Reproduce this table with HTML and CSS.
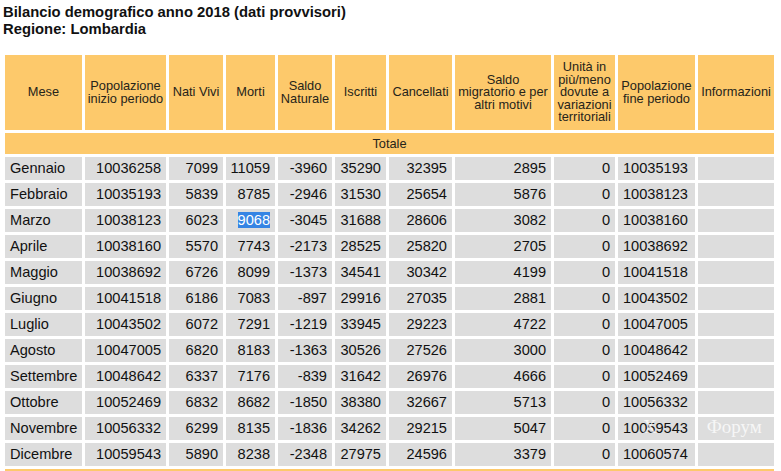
FILE: index.html
```html
<!DOCTYPE html>
<html lang="it">
<head>
<meta charset="utf-8">
<title>Bilancio demografico 2018 - Lombardia</title>
<link rel="stylesheet" href="styles.css">
</head>
<body>
<div class="page">
  <div class="title">
    <div>Bilancio demografico anno 2018 (dati provvisori)</div>
    <div>Regione: Lombardia</div>
  </div>
  <div class="table-wrap">
    <table class="bil">
      <thead>
        <tr>
          <th class="c1">Mese</th>
          <th class="c2">Popolazione inizio periodo</th>
          <th class="c3">Nati Vivi</th>
          <th class="c4">Morti</th>
          <th class="c5">Saldo Naturale</th>
          <th class="c6">Iscritti</th>
          <th class="c7">Cancellati</th>
          <th class="c8">Saldo migratorio e per altri motivi</th>
          <th class="c9">Unità in più/meno dovute a variazioni territoriali</th>
          <th class="c10">Popolazione fine periodo</th>
          <th class="c11">Informazioni</th>
        </tr>
        <tr class="tot"><th colspan="11">Totale</th></tr>
      </thead>
      <tbody>
        <tr><td class="m">Gennaio</td><td>10036258</td><td>7099</td><td>11059</td><td>-3960</td><td>35290</td><td>32395</td><td>2895</td><td>0</td><td class="l">10035193</td><td></td></tr>
        <tr><td class="m">Febbraio</td><td>10035193</td><td>5839</td><td>8785</td><td>-2946</td><td>31530</td><td>25654</td><td>5876</td><td>0</td><td class="l">10038123</td><td></td></tr>
        <tr><td class="m">Marzo</td><td>10038123</td><td>6023</td><td><span class="sel">9068</span></td><td>-3045</td><td>31688</td><td>28606</td><td>3082</td><td>0</td><td class="l">10038160</td><td></td></tr>
        <tr><td class="m">Aprile</td><td>10038160</td><td>5570</td><td>7743</td><td>-2173</td><td>28525</td><td>25820</td><td>2705</td><td>0</td><td class="l">10038692</td><td></td></tr>
        <tr><td class="m">Maggio</td><td>10038692</td><td>6726</td><td>8099</td><td>-1373</td><td>34541</td><td>30342</td><td>4199</td><td>0</td><td class="l">10041518</td><td></td></tr>
        <tr><td class="m">Giugno</td><td>10041518</td><td>6186</td><td>7083</td><td>-897</td><td>29916</td><td>27035</td><td>2881</td><td>0</td><td class="l">10043502</td><td></td></tr>
        <tr><td class="m">Luglio</td><td>10043502</td><td>6072</td><td>7291</td><td>-1219</td><td>33945</td><td>29223</td><td>4722</td><td>0</td><td class="l">10047005</td><td></td></tr>
        <tr><td class="m">Agosto</td><td>10047005</td><td>6820</td><td>8183</td><td>-1363</td><td>30526</td><td>27526</td><td>3000</td><td>0</td><td class="l">10048642</td><td></td></tr>
        <tr><td class="m">Settembre</td><td>10048642</td><td>6337</td><td>7176</td><td>-839</td><td>31642</td><td>26976</td><td>4666</td><td>0</td><td class="l">10052469</td><td></td></tr>
        <tr><td class="m">Ottobre</td><td>10052469</td><td>6832</td><td>8682</td><td>-1850</td><td>38380</td><td>32667</td><td>5713</td><td>0</td><td class="l">10056332</td><td></td></tr>
        <tr><td class="m">Novembre</td><td>10056332</td><td>6299</td><td>8135</td><td>-1836</td><td>34262</td><td>29215</td><td>5047</td><td>0</td><td class="l">10059543</td><td></td></tr>
        <tr><td class="m">Dicembre</td><td>10059543</td><td>5890</td><td>8238</td><td>-2348</td><td>27975</td><td>24596</td><td>3379</td><td>0</td><td class="l">10060574</td><td></td></tr>
      </tbody>
      <tfoot>
        <tr><td colspan="11" class="foot">&nbsp;</td></tr>
      </tfoot>
    </table>
    <div class="watermark"><span>Х</span><span class="wm2">Форум</span></div>
  </div>
</div>
</body>
</html>
```

FILE: styles.css
```css
html, body {
  margin: 0;
  padding: 0;
  background: #ffffff;
}
.page {
  padding: 4px 0 0 2px;
  font-family: "Liberation Sans", Arial, sans-serif;
  color: #111;
}
.title {
  padding-left: 1px;
  font-size: 14.8px;
  font-weight: bold;
  line-height: 16.5px;
}
.table-wrap {
  position: relative;
  margin-top: 15px;
  width: 775px;
}
.bil {
  border-collapse: separate;
  border-spacing: 3px;
  table-layout: fixed;
  width: 775px;
}
.bil th, .bil td {
  box-sizing: border-box;
}
.bil thead th {
  background: #fdc96b;
  color: #26241a;
  font-weight: normal;
  font-size: 12.8px;
  line-height: 12.6px;
  height: 75px;
  padding: 0 2px;
  text-align: center;
  vertical-align: middle;
}
.bil .c1 { width: 77px; }
.bil .c2 { width: 81px; }
.bil .c3 { width: 54px; }
.bil .c4 { width: 49px; }
.bil .c5 { width: 54px; }
.bil .c6 { width: 51px; }
.bil .c7 { width: 63px; }
.bil .c8 { width: 96px; }
.bil .c9 { width: 61px; }
.bil .c10 { width: 77px; }
.bil .c11 { width: 76px; }
.bil .tot th {
  height: 21px;
  font-size: 12.8px;
  line-height: 14px;
  padding: 0;
}
.bil tbody td {
  background: #dddddd;
  height: 23px;
  padding: 0 5px 0 4px;
  font-size: 14.6px;
  line-height: 17px;
  text-align: right;
  vertical-align: middle;
  color: #111;
  white-space: nowrap;
}
.bil tbody td.m {
  text-align: left;
  padding-left: 5px;
}
.bil tbody td.l {
  text-align: left;
  padding-left: 5px;
}
.sel {
  background: #3584e4;
  color: #ffffff;
}
.bil .foot {
  background: #fdc96b;
  height: 20px;
  padding: 0;
}
.watermark {
  position: absolute;
  left: 641px;
  top: 364px;
  font-family: "Liberation Serif", "DejaVu Serif", serif;
  font-size: 19px;
  color: rgba(255, 255, 255, 0.75);
  pointer-events: none;
  white-space: nowrap;
}
.watermark .wm2 {
  margin-left: 50px;
}
```
